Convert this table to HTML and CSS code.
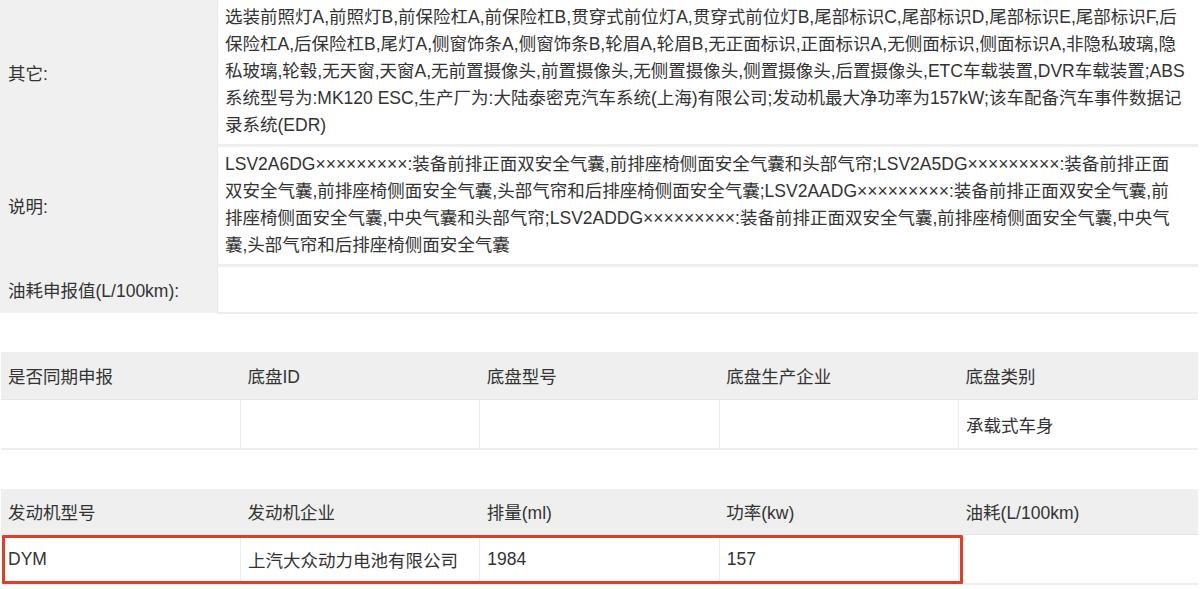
FILE: index.html
```html
<!DOCTYPE html>
<html lang="zh-CN">
<head>
    <meta charset="UTF-8">
    <title>车型参数</title>
    <link rel="stylesheet" href="styles.css">
</head>
<body>

    <!-- 其它 / 说明 -->
    <table class="info-table">
        <tr class="row-other">
            <th>其它:</th>
            <td>选装前照灯A,前照灯B,前保险杠A,前保险杠B,贯穿式前位灯A,贯穿式前位灯B,尾部标识C,尾部标识D,尾部标识E,尾部标识F,后保险杠A,后保险杠B,尾灯A,侧窗饰条A,侧窗饰条B,轮眉A,轮眉B,无正面标识,正面标识A,无侧面标识,侧面标识A,非隐私玻璃,隐私玻璃,轮毂,无天窗,天窗A,无前置摄像头,前置摄像头,无侧置摄像头,侧置摄像头,后置摄像头,ETC车载装置,DVR车载装置;ABS系统型号为:MK120 ESC,生产厂为:大陆泰密克汽车系统(上海)有限公司;发动机最大净功率为157kW;该车配备汽车事件数据记录系统(EDR)</td>
        </tr>
        <tr class="row-note">
            <th>说明:</th>
            <td>LSV2A6DG×××××××××:装备前排正面双安全气囊,前排座椅侧面安全气囊和头部气帘;LSV2A5DG×××××××××:装备前排正面双安全气囊,前排座椅侧面安全气囊,头部气帘和后排座椅侧面安全气囊;LSV2AADG×××××××××:装备前排正面双安全气囊,前排座椅侧面安全气囊,中央气囊和头部气帘;LSV2ADDG×××××××××:装备前排正面双安全气囊,前排座椅侧面安全气囊,中央气囊,头部气帘和后排座椅侧面安全气囊</td>
        </tr>
        <tr class="row-fuel">
            <th>油耗申报值(L/100km):</th>
            <td></td>
        </tr>
    </table>

    <!-- 底盘 -->
    <table class="grid-table chassis">
        <tr>
            <th>是否同期申报</th>
            <th>底盘ID</th>
            <th>底盘型号</th>
            <th>底盘生产企业</th>
            <th>底盘类别</th>
        </tr>
        <tr>
            <td></td>
            <td></td>
            <td></td>
            <td></td>
            <td>承载式车身</td>
        </tr>
    </table>

    <!-- 发动机 -->
    <div class="engine-wrap">
        <table class="grid-table engine">
            <tr>
                <th>发动机型号</th>
                <th>发动机企业</th>
                <th>排量(ml)</th>
                <th>功率(kw)</th>
                <th>油耗(L/100km)</th>
            </tr>
            <tr>
                <td>DYM</td>
                <td>上汽大众动力电池有限公司</td>
                <td>1984</td>
                <td>157</td>
                <td></td>
            </tr>
        </table>
        <div class="highlight"></div>
    </div>

</body>
</html>
```

FILE: styles.css
```css
body {
    margin: 0;
    padding: 0;
    background: #fff;
    color: #333;
    font-family: "Liberation Sans", "Noto Sans CJK SC", sans-serif;
    font-size: 17.5px;
    width: 1200px;
    overflow: hidden;
}

table {
    border-collapse: collapse;
    table-layout: fixed;
}

/* top info table */
.info-table {
    width: 1198px;
}
.info-table th {
    width: 209px;
    background: #f0f0f0;
    font-weight: normal;
    text-align: left;
    padding: 0 0 0 8px;
    border-right: 1px solid #e8e8e8;
    white-space: nowrap;
}
.info-table td {
    line-height: 27px;
    padding: 4px 14px 5px 7px;
    border-bottom: 3px solid #eeeeee;
    vertical-align: top;
}
.info-table .row-other td {
    padding-right: 10px;
}
.info-table .row-fuel td {
    height: 45px;
    padding: 0;
    border-bottom: 2px solid #eeeeee;
}
.info-table .row-fuel th {
    height: 45px;
    padding-top: 0;
    padding-bottom: 0;
}

/* grid tables */
.grid-table {
    width: 1197px;
    margin-left: 1px;
}
.grid-table th {
    background: #efefef;
    font-weight: normal;
    text-align: left;
    height: 47px;
    padding: 0 0 0 7px;
    border-bottom: 1px solid #e6e6e6;
}
.grid-table td {
    height: 48px;
    padding: 0 0 0 7px;
    border-left: 1px solid #ececec;
    border-bottom: 2px solid #eeeeee;
}
.grid-table td:first-child {
    border-left: none;
}
.chassis {
    margin-top: 38px;
}

.engine-wrap {
    position: relative;
    margin-top: 39px;
}
.engine th {
    height: 45px;
}

/* red annotation box */
.highlight {
    position: absolute;
    left: 2px;
    top: 46px;
    width: 955px;
    height: 43px;
    border: 3px solid #d9412a;
    border-radius: 1px;
}
```
